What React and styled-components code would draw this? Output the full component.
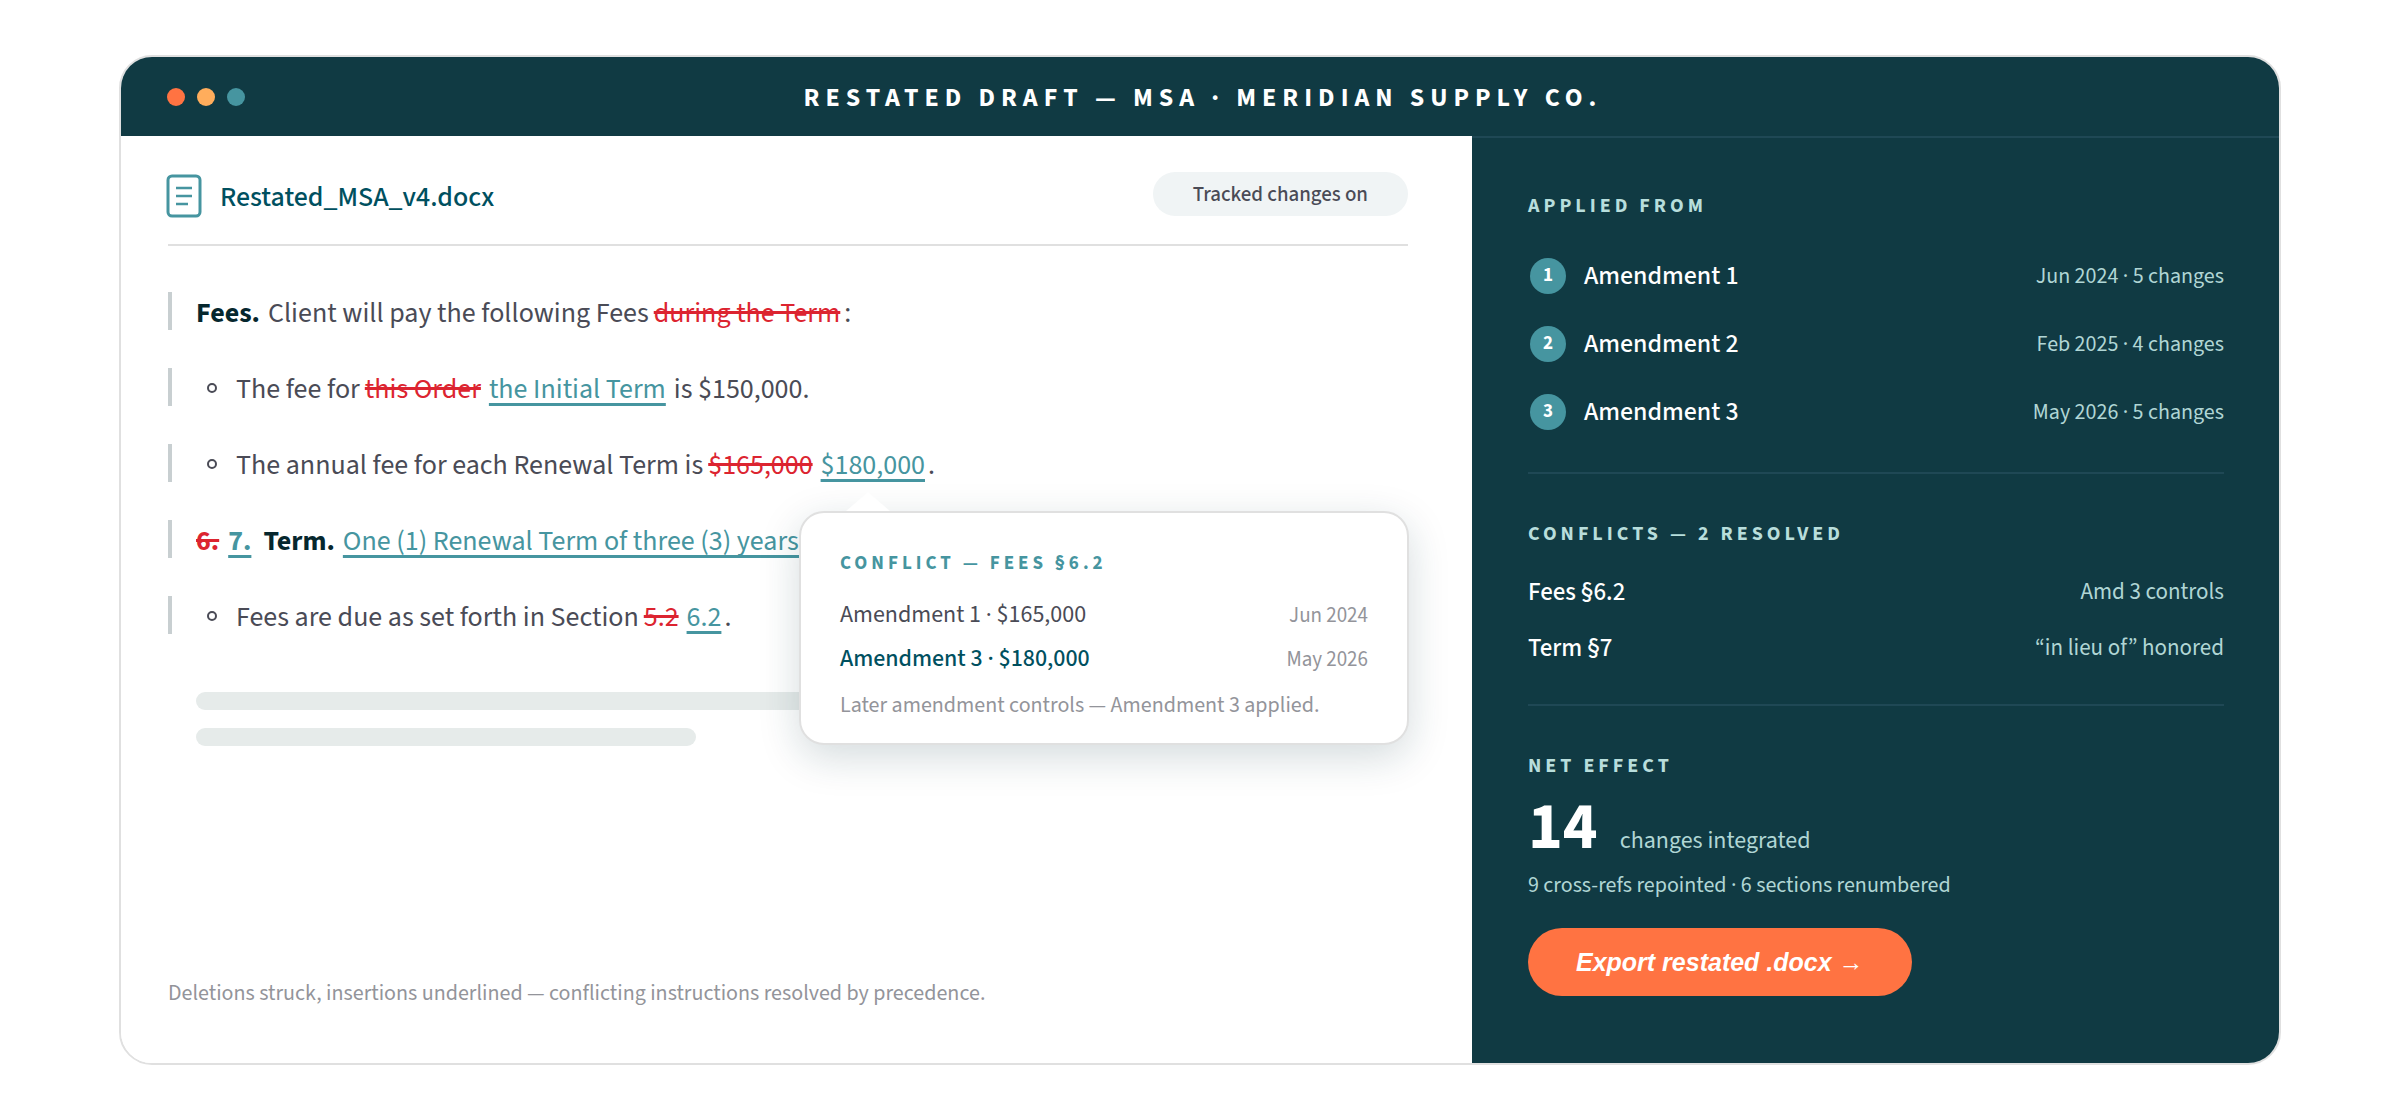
import React from 'react'
import styled, { createGlobalStyle } from 'styled-components'

const GlobalStyle = createGlobalStyle`
    * {
        box-sizing: border-box;
    }

    body {
        margin: 0;
        background: #ffffff;
        font-family: "Source Sans 3", "Noto Sans CJK JP", "Noto Sans", sans-serif;
        font-weight: 400;
        color: #4a4b56;
    }

    h1, h2, p, ul, dl, dd, dt {
        margin: 0;
        padding: 0;
        font-weight: inherit;
    }
`
const Page = styled.main`
    min-height: 100vh;
    display: flex;
    padding: 55px 119px;
`
const Card = styled.article`
    flex: 1;
    display: flex;
    flex-direction: column;
    border: 2px solid #e0e0e0;
    border-radius: 33px;
    overflow: hidden;
`
const TitleBar = styled.header`
    display: grid;
    grid-template-columns: 1fr auto 1fr;
    align-items: center;
    min-height: 79px;
    padding: 0 46px;
    background: #103a43;
`
const Dots = styled.div`
    display: flex;
    gap: 12px;
`
const Dot = styled.span`
    width: 18px;
    height: 18px;
    border-radius: 50%;
    background: ${props => props.$color};
`
const Title = styled.h1`
    padding: 2px 0 0 6px;
    font-size: 26px;
    line-height: 32px;
    font-weight: 700;
    letter-spacing: 6px;
    color: #ffffff;
`
const Columns = styled.div`
    flex: 1;
    display: grid;
    grid-template-columns: 1351fr 807fr;
`
const Document = styled.section`
    display: flex;
    flex-direction: column;
    padding: 36px 64px 56px 47px;
    background: #ffffff;
`
const FileBar = styled.div`
    display: flex;
    justify-content: space-between;
    align-items: flex-start;
    padding-bottom: 22px;
    border-bottom: 2px solid #e0e0e0;
`
const FileName = styled.h2`
    display: flex;
    gap: 18px;
    font-size: 28px;
    line-height: 50px;
    font-weight: 500;
    color: #00505f;
`
const FileIcon = styled.svg`
    width: 34px;
    height: 44px;
    overflow: visible;
`
const Pill = styled.span`
    padding: 0 40px;
    border-radius: 22px;
    background: #f0f4f5;
    font-size: 21px;
    line-height: 44px;
    font-weight: 500;
`
const Body = styled.div`
    position: relative;
    margin-top: 46px;
`
const Clauses = styled.ul`
    display: flex;
    flex-direction: column;
    gap: 38px;
    list-style: none;
`
const Clause = styled.li`
    display: flex;
    align-items: center;
    padding: 4px 0 0 24px;
    border-left: 4px solid #c8cfd1;
    font-size: 28px;
    line-height: 34px;
    white-space: pre;
`
const Bullet = styled.span`
    width: 10px;
    height: 10px;
    margin: 0 19px 2px 11px;
    border: 2px solid #4a4b56;
    border-radius: 50%;
`
const Strong = styled.strong`
    margin-right: 8px;
    font-weight: 700;
    color: #06272e;
`
const Deleted = styled.del`
    margin: 0 ${props => props.$gap || 8}px 0 5px;
    color: #dc2430;
    font-weight: ${props => props.$bold ? 700 : 'inherit'};
    text-decoration: line-through 3px;

    &:first-child {
        margin-left: 0;
    }
`
const Inserted = styled.ins`
    margin-right: ${props => props.$gap || 3}px;
    color: #4695a0;
    font-weight: ${props => props.$bold ? 700 : 'inherit'};
    text-decoration: underline 3px;
    text-underline-offset: 5px;
    text-decoration-skip-ink: none;
`
const Placeholder = styled.div`
    display: flex;
    flex-direction: column;
    gap: 18px;
    margin-top: 58px;
    padding-left: 28px;
`
const Line = styled.span`
    width: ${props => props.$width};
    height: 18px;
    border-radius: 9px;
    background: #e6ebea;
`
const Popover = styled.aside`
    position: absolute;
    top: 219px;
    right: -1px;
    width: 610px;
    padding: 37px 39px 24px;
    border: 2px solid #e0e0e0;
    border-radius: 25px;
    background: #ffffff;
    box-shadow: 0 12px 40px rgba(17, 58, 67, 0.18);

    &::before {
        content: "";
        position: absolute;
        top: -21px;
        left: 45px;
        border: solid transparent;
        border-width: 0 22px 19px;
        border-bottom-color: #ffffff;
    }
`
const Label = styled.h2`
    font-size: ${props => props.$small ? 19 : 20}px;
    line-height: 28px;
    font-weight: 700;
    letter-spacing: 4px;
    color: ${props => props.$small ? '#4695a0' : '#b8dedc'};
`
const Versions = styled.dl`
    display: flex;
    flex-direction: column;
    gap: 16px;
    margin-top: 23px;
`
const Version = styled.div`
    display: flex;
    justify-content: space-between;
    font-size: 24px;
    line-height: 28px;
    font-weight: ${props => props.$current ? 500 : 'inherit'};
    color: ${props => props.$current ? '#00505f' : 'inherit'};
`
const VersionDate = styled.dd`
    font-size: 21px;
    font-weight: 400;
    color: #93949a;
`
const Note = styled.p`
    margin-top: ${props => props.$top};
    font-size: 22px;
    line-height: 28px;
    color: #93949a;
`
const Side = styled.aside`
    padding: 0 55px 56px 56px;
    border-top: 2px solid #1f4855;
    background: #103a43;
    color: #ffffff;
`
const Section = styled.section`
    padding: ${props => props.$padding};

    & + & {
        border-top: 2px solid #1f4855;
    }
`
const Amendments = styled.ul`
    display: flex;
    flex-direction: column;
    gap: 32px;
    margin-top: 38px;
    list-style: none;
`
const Amendment = styled.li`
    display: flex;
    padding-left: 2px;
    font-size: 26px;
    line-height: 36px;
    font-weight: 500;
`
const Badge = styled.span`
    width: 36px;
    margin-right: 18px;
    border-radius: 50%;
    background: #4695a0;
    font-size: 19px;
    font-weight: 700;
    text-align: center;
`
const Meta = styled.span`
    margin-left: auto;
    font-size: ${props => props.$size || 22}px;
    font-weight: 400;
    color: #b0d6d5;
`
const Conflicts = styled.ul`
    display: flex;
    flex-direction: column;
    gap: 24px;
    margin-top: 28px;
    list-style: none;
`
const Conflict = styled.li`
    display: flex;
    font-size: 25px;
    line-height: 32px;
    font-weight: 500;
`
const Total = styled.p`
    display: flex;
    align-items: baseline;
    gap: 22px;
    margin-top: 15px;
    font-size: 24px;
    line-height: 32px;
    color: #b0d6d5;
`
const Count = styled.strong`
    font-size: 66px;
    line-height: 64px;
    font-weight: 700;
    color: #ffffff;
`
const Summary = styled.p`
    margin-top: 12px;
    font-size: 22px;
    line-height: 28px;
    color: #b0d6d5;
`
const ExportButton = styled.button`
    margin-top: 29px;
    padding: 0 48px;
    border: 0;
    border-radius: 34px;
    background: #ff7342;
    color: #ffffff;
    font: italic 700 25px/68px "Liberation Sans", Arial, sans-serif;
    cursor: pointer;
`

const amendments = [
    { id: 1, meta: 'Jun 2024 · 5 changes' },
    { id: 2, meta: 'Feb 2025 · 4 changes' },
    { id: 3, meta: 'May 2026 · 5 changes' },
]

const conflicts = [
    { clause: 'Fees §6.2', result: 'Amd 3 controls' },
    { clause: 'Term §7', result: '“in lieu of” honored' },
]

function ConflictPopover() {
    return (
        <Popover>
            <Label $small>CONFLICT — FEES §6.2</Label>
            <Versions>
                <Version>
                    <dt>Amendment 1 · $165,000</dt>
                    <VersionDate>Jun 2024</VersionDate>
                </Version>
                <Version $current>
                    <dt>Amendment 3 · $180,000</dt>
                    <VersionDate>May 2026</VersionDate>
                </Version>
            </Versions>
            <Note $top="18px">Later amendment controls — Amendment 3 applied.</Note>
        </Popover>
    )
}

function Draft() {
    return (
        <Document>
            <FileBar>
                <FileName>
                    <FileIcon viewBox="0 0 34 44" fill="none" stroke="#4695a0" aria-hidden="true">
                        <rect x="0" y="4" width="32" height="40" rx="4" strokeWidth="3" />
                        <path d="M8 16h16M8 24h16M8 32h12" strokeWidth="2.4" />
                    </FileIcon>
                    Restated_MSA_v4.docx
                </FileName>
                <Pill>Tracked changes on</Pill>
            </FileBar>

            <Body>
                <Clauses>
                    <Clause>
                        <Strong>Fees.</Strong>Client will pay the following Fees
                        <Deleted $gap={4}>during the Term</Deleted>:
                    </Clause>
                    <Clause>
                        <Bullet />The fee for
                        <Deleted>this Order</Deleted>
                        <Inserted $gap={8}>the Initial Term</Inserted>is $150,000.
                    </Clause>
                    <Clause>
                        <Bullet />The annual fee for each Renewal Term is
                        <Deleted>$165,000</Deleted>
                        <Inserted>$180,000</Inserted>.
                    </Clause>
                    <Clause>
                        <Deleted $bold $gap={9}>6.</Deleted>
                        <Inserted $bold $gap={12}>7.</Inserted>
                        <Strong>Term.</Strong>
                        <Inserted>One (1) Renewal Term of three (3) years,</Inserted>
                    </Clause>
                    <Clause>
                        <Bullet />Fees are due as set forth in Section
                        <Deleted>5.2</Deleted>
                        <Inserted>6.2</Inserted>.
                    </Clause>
                </Clauses>
                <Placeholder>
                    <Line $width="60%" />
                    <Line $width="500px" />
                </Placeholder>
                <ConflictPopover />
            </Body>

            <Note $top="auto">
                Deletions struck, insertions underlined — conflicting instructions resolved by precedence.
            </Note>
        </Document>
    )
}

function Sidebar() {
    return (
        <Side>
            <Section $padding="54px 0 42px">
                <Label>APPLIED FROM</Label>
                <Amendments>
                    {amendments.map(({ id, meta }) => (
                        <Amendment key={id}>
                            <Badge>{id}</Badge>
                            Amendment {id}
                            <Meta>{meta}</Meta>
                        </Amendment>
                    ))}
                </Amendments>
            </Section>
            <Section $padding="46px 0 40px">
                <Label>CONFLICTS — 2 RESOLVED</Label>
                <Conflicts>
                    {conflicts.map(({ clause, result }) => (
                        <Conflict key={clause}>
                            {clause}
                            <Meta $size={23}>{result}</Meta>
                        </Conflict>
                    ))}
                </Conflicts>
            </Section>
            <Section $padding="46px 0 0">
                <Label>NET EFFECT</Label>
                <Total>
                    <Count>14</Count>
                    changes integrated
                </Total>
                <Summary>9 cross-refs repointed · 6 sections renumbered</Summary>
                <ExportButton type="button">Export restated .docx →</ExportButton>
            </Section>
        </Side>
    )
}

export default function App() {
    return (
        <Page>
            <GlobalStyle />
            <Card>
                <TitleBar>
                    <Dots>
                        <Dot $color="#ff7342" />
                        <Dot $color="#ffad5c" />
                        <Dot $color="#4695a0" />
                    </Dots>
                    <Title>RESTATED DRAFT — MSA · MERIDIAN SUPPLY CO.</Title>
                </TitleBar>
                <Columns>
                    <Draft />
                    <Sidebar />
                </Columns>
            </Card>
        </Page>
    )
}
